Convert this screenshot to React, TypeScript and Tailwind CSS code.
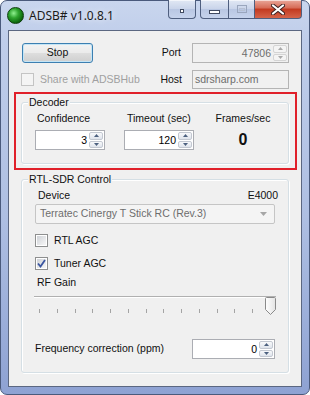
import React from 'react';

const SpinArrows = ({ disabled }: { disabled?: boolean }) => (
  <div className="flex w-[15px] flex-col gap-[1px] py-[1px] pr-[1px]">
    <div className={`flex flex-1 items-center justify-center rounded-[2px] border ${disabled ? 'border-[#d4d4d4] bg-[#f4f4f4]' : 'border-[#c3c8d1] bg-[linear-gradient(#f8f9fb,#dfe4ec)]'}`}>
      <svg width="5" height="3" viewBox="0 0 5 3">
        <path d="M2.5 0L5 3H0z" fill={disabled ? '#a9a9a9' : '#4c607f'} />
      </svg>
    </div>
    <div className={`flex flex-1 items-center justify-center rounded-[2px] border ${disabled ? 'border-[#d4d4d4] bg-[#f4f4f4]' : 'border-[#c3c8d1] bg-[linear-gradient(#f8f9fb,#dfe4ec)]'}`}>
      <svg width="5" height="3" viewBox="0 0 5 3">
        <path d="M0 0H5L2.5 3z" fill={disabled ? '#a9a9a9' : '#4c607f'} />
      </svg>
    </div>
  </div>
);

const NumBox = ({ value, className, disabled }: { value: string; className: string; disabled?: boolean }) => (
  <div className={`flex h-[20px] border ${disabled ? 'border-[#b4b4b4] bg-[#f0f0f0] text-[#6d6d6d]' : 'border-[#abadb3] bg-white text-black'} ${className}`}>
    <span className="flex-1 pr-[2px] text-right leading-[18px]">{value}</span>
    <SpinArrows disabled={disabled} />
  </div>
);

const CheckBox = ({ checked, disabled }: { checked?: boolean; disabled?: boolean }) => (
  <div className={`flex h-[13px] w-[13px] shrink-0 items-center justify-center border ${disabled ? 'border-[#c4c4c4] bg-[#f4f4f4]' : 'border-[#8e8f8f] bg-white'}`}>
    <div className={`flex h-[9px] w-[9px] items-center justify-center ${disabled ? 'bg-[#f4f4f4]' : 'bg-[linear-gradient(135deg,#cfd2d7,#f7f7f7)]'}`}>
      {checked && (
        <svg width="9" height="9" viewBox="0 0 9 9">
          <path d="M1 4.5L3.5 7.5L8 1" fill="none" stroke="#3a55a0" strokeWidth="1.8" />
        </svg>
      )}
    </div>
  </div>
);

const GroupBox = ({ title, className, children }: { title: string; className: string; children: React.ReactNode }) => (
  <div className={`relative rounded-[3px] border border-[#d5dfe5] shadow-[inset_1px_1px_0_#fff,1px_1px_0_#fff] ${className}`}>
    <span className="absolute -top-[8px] left-[6px] bg-[#f0f0f0] px-[1px] leading-[14px]">{title}</span>
    {children}
  </div>
);

const TitleButton = ({ className, children }: { className: string; children?: React.ReactNode }) => (
  <div className={`flex h-[19px] items-center justify-center border border-t-0 border-[#4f5f7f] shadow-[inset_0_1px_0_rgba(255,255,255,0.6)] ${className}`}>
    {children}
  </div>
);

export default function App() {
  const ticks = Array.from({ length: 14 }, (_, i) => i);

  return (
    <div className="h-[395px] w-[310px] overflow-hidden bg-white">
      <div className="flex h-[395px] w-[310px] flex-col rounded-[7px] border border-[#4a5a7c] bg-[linear-gradient(180deg,#c9d6ee_0%,#bfcdea_10%,#aebfe2_55%,#8ea2d3_100%)] font-['Liberation_Sans',Arial,sans-serif] text-[10.5px] text-[#111]">
        {/* title bar */}
        <div className="flex h-[29px] shrink-0 items-start">
          <div className="ml-[6px] mt-[6px] h-[17px] w-[17px] rounded-full border border-[#0c3d0c] bg-[radial-gradient(circle_at_38%_35%,#8ff08f_0%,#2fa52f_35%,#0e6a0e_70%,#093f09_100%)]" />
          <span className="ml-[5px] mt-[6px] font-['Noto_Sans',sans-serif] text-[12px] leading-[17px] text-[#1b1b1b] [text-shadow:0_0_6px_#fff]">
            ADSB# v1.0.8.1
          </span>
          <div className="ml-auto mr-[7px] -mt-[1px] flex">
            <TitleButton className="w-[28px] rounded-b-[4px] bg-[linear-gradient(#e1e8f4,#c9d4ea_50%,#b8c6e2_50%,#c6d3ec)]">
              <div className="mt-[4px] h-[4px] w-[4px] border border-[#404a60] bg-white" />
            </TitleButton>
            <div className="ml-[4px] flex">
              <TitleButton className="w-[29px] rounded-bl-[4px] bg-[linear-gradient(#e1e8f4,#c9d4ea_50%,#b8c6e2_50%,#c6d3ec)]">
                <div className="mt-[5px] h-[4px] w-[11px] border border-[#404a60] bg-white" />
              </TitleButton>
              <TitleButton className="w-[26px] border-l-0 bg-[linear-gradient(#e1e8f4,#c9d4ea_50%,#b8c6e2_50%,#c6d3ec)]">
                <div className="flex h-[8px] w-[10px] items-center justify-center border border-[#9aa6bd]">
                  <div className="h-[3px] w-[6px] border border-[#b6c0d2]" />
                </div>
              </TitleButton>
              <TitleButton className="w-[47px] rounded-br-[4px] border-l-0 bg-[linear-gradient(#e9a79a,#d66a55_45%,#c2391f_50%,#d5644a)]">
                <svg width="14" height="11" viewBox="0 0 14 11">
                  <path d="M2 1.5L12 9.5M12 1.5L2 9.5" stroke="#3c2020" strokeWidth="4" strokeLinecap="round" />
                  <path d="M2 1.5L12 9.5M12 1.5L2 9.5" stroke="#fff" strokeWidth="2.2" strokeLinecap="round" />
                </svg>
              </TitleButton>
            </div>
          </div>
        </div>

        {/* client area */}
        <div className="mx-[7px] h-[357px] shrink-0 border border-[#5b6781] bg-[#f0f0f0]">
          <div className="flex items-center pl-[13px] pr-[12px] pt-[12px]">
            <div className="flex h-[20px] w-[71px] items-center justify-center rounded-[3px] border border-[#3c7fb1] bg-[linear-gradient(#f3f3f3,#ebebeb_48%,#dddddd_52%,#cfcfcf)] shadow-[inset_0_0_0_1px_#c4e5f6]">
              Stop
            </div>
            <span className="ml-auto">Port</span>
            <NumBox value="47806" className="ml-[11px] w-[97px]" disabled />
          </div>

          <div className="mt-[7px] flex items-center pl-[12px] pr-[12px]">
            <CheckBox disabled />
            <span className="ml-[6px] text-[#a0a0a0]">Share with ADSBHub</span>
            <span className="ml-auto">Host</span>
            <div className="ml-[10px] flex h-[19px] w-[97px] items-center border border-[#b4b4b4] bg-[#f0f0f0] pl-[2px] text-[#6d6d6d]">
              sdrsharp.com
            </div>
          </div>

          {/* decoder (highlighted) */}
          <div className="ml-[5px] mt-[3px] h-[78px] w-[283px] border-2 border-[#e0202a] pt-[8px]">
            <GroupBox title="Decoder" className="ml-[5px] h-[62px] w-[268px]">
              <div className="flex pl-[13px] pt-[8px]">
                <div className="flex w-[89px] flex-col">
                  <span className="pl-[2px] leading-[14px]">Confidence</span>
                  <NumBox value="3" className="mt-[5px] w-[70px]" />
                </div>
                <div className="flex w-[89px] flex-col">
                  <span className="pl-[3px] leading-[14px]">Timeout (sec)</span>
                  <NumBox value="120" className="mt-[5px] w-[70px]" />
                </div>
                <div className="flex w-[60px] flex-col items-center">
                  <span className="leading-[14px]">Frames/sec</span>
                  <span className="mt-[5px] text-[16px] font-bold leading-[20px]">0</span>
                </div>
              </div>
            </GroupBox>
          </div>

          {/* rtl-sdr */}
          <GroupBox title="RTL-SDR Control" className="ml-[12px] mt-[9px] h-[194px] w-[268px]">
            <div className="flex pl-[16px] pr-[10px] pt-[8px] leading-[14px]">
              <span>Device</span>
              <span className="ml-auto">E4000</span>
            </div>
            <div className="ml-[13px] mt-[2px] flex h-[20px] w-[240px] items-center rounded-[2px] border border-[#c5c5c5] bg-[#f4f4f4] pl-[4px] pr-[7px] text-[#6d6d6d]">
              <span className="flex-1">Terratec Cinergy T Stick RC (Rev.3)</span>
              <svg width="7" height="4" viewBox="0 0 7 4">
                <path d="M0 0H7L3.5 4z" fill="#a6a6a6" />
              </svg>
            </div>
            <div className="ml-[13px] mt-[10px] flex h-[13px] items-center">
              <CheckBox />
              <span className="ml-[6px]">RTL AGC</span>
            </div>
            <div className="ml-[13px] mt-[10px] flex h-[13px] items-center">
              <CheckBox checked />
              <span className="ml-[6px]">Tuner AGC</span>
            </div>
            <div className="ml-[15px] mt-[5px] leading-[14px]">RF Gain</div>
            <div className="relative ml-[12px] mt-[3px] w-[242px]">
              <div className="mt-[7px] h-[2px] border-t border-[#b0b0b0] bg-white" />
              <div className="mt-[11px] flex h-[4px] justify-between pl-[5px] pr-[5px]">
                {ticks.map((t) => (
                  <div key={t} className="h-[4px] w-[1px] bg-[#a4a4a4]" />
                ))}
              </div>
              <svg className="absolute left-[231px] top-[1px]" width="11" height="18" viewBox="0 0 11 18">
                <defs>
                  <linearGradient id="thumb" x1="0" y1="0" x2="1" y2="0">
                    <stop offset="0" stopColor="#ffffff" />
                    <stop offset="1" stopColor="#e3e3e3" />
                  </linearGradient>
                </defs>
                <path d="M0.5 1.5Q0.5 0.5 1.5 0.5H9.5Q10.5 0.5 10.5 1.5V12.5L5.5 17.5L0.5 12.5Z" fill="url(#thumb)" stroke="#8a8a8a" />
              </svg>
            </div>
            <div className="mt-[26px] flex items-center pl-[13px] pr-[13px]">
              <span>Frequency correction (ppm)</span>
              <NumBox value="0" className="ml-auto w-[83px]" />
            </div>
          </GroupBox>
        </div>
      </div>
    </div>
  );
}
